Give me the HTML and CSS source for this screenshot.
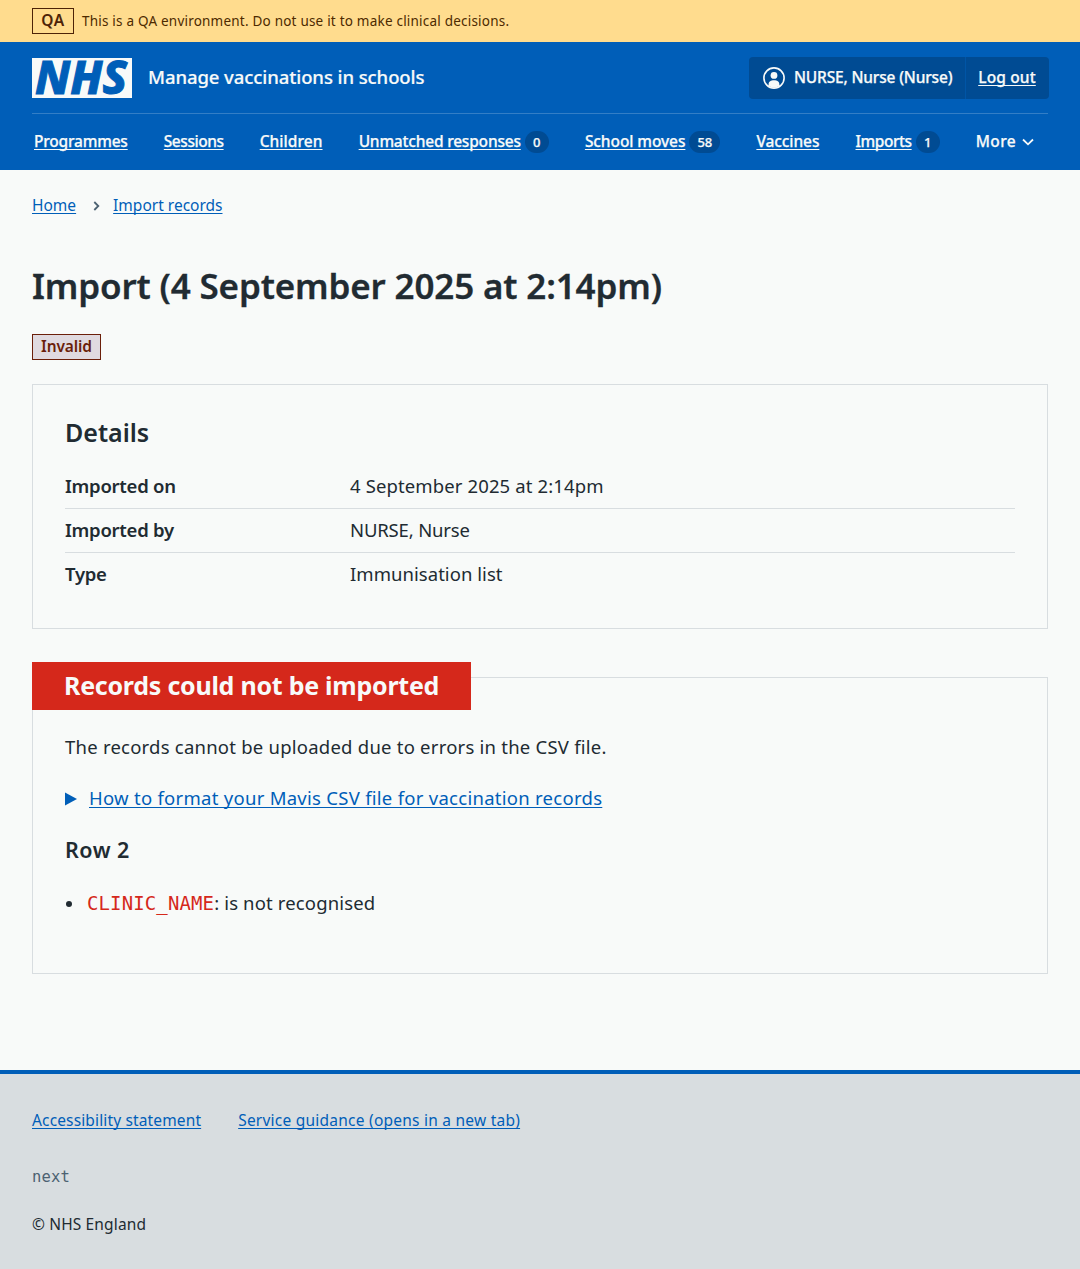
FILE: index.html
```html
<!DOCTYPE html>
<html lang="en">
<head>
<meta charset="utf-8">
<title>Import (4 September 2025 at 2:14pm)</title>
<link rel="stylesheet" href="styles.css">
</head>
<body>
<div class="banner"><strong class="tag tag-qa">QA</strong><span class="banner-text">This is a QA environment. Do not use it to make clinical decisions.</span></div>
<header class="header">
  <div class="header-top">
    <svg class="logo" viewBox="0 0 100 40" width="100" height="40" role="img" aria-label="NHS"><rect width="100" height="40" fill="#f8faf9"/><text x="3" y="36" textLength="92" lengthAdjust="spacingAndGlyphs">NHS</text></svg>
    <span class="service">Manage vaccinations in schools</span>
    <div class="account">
      <span class="account-user"><svg width="22" height="22" viewBox="0 0 22 22"><circle cx="11" cy="11" r="10.1" fill="none" stroke="currentColor" stroke-width="1.6"/><circle cx="11" cy="8.4" r="3.4" fill="currentColor"/><path d="M5.600 19v-1.500C5.600 14.500 8 13.200 11 13.200s5.400 1.300 5.400 4.300V19a10 10 0 0 1-10.800 0z" fill="currentColor"/></svg><span class="account-name">NURSE, Nurse (Nurse)</span></span>
      <a class="account-out" href="#">Log out</a>
    </div>
  </div>
  <nav class="nav">
    <a href="#" class="nav-link">Programmes</a>
    <a href="#" class="nav-link nav-tight">Sessions</a>
    <a href="#" class="nav-link nav-wide">Children</a>
    <span class="nav-item"><a href="#" class="nav-link">Unmatched responses</a><span class="count">0</span></span>
    <span class="nav-item"><a href="#" class="nav-link nav-even">School moves</a><span class="count">58</span></span>
    <a href="#" class="nav-link nav-even">Vaccines</a>
    <span class="nav-item"><a href="#" class="nav-link nav-tight">Imports</a><span class="count">1</span></span>
    <span class="nav-item"><span class="nav-more">More</span><svg class="chevron" width="12" height="8" viewBox="0 0 12 8"><path d="M1 1.500 6 6.300l5-4.800" fill="none" stroke="currentColor" stroke-width="1.800"/></svg></span>
  </nav>
</header>
<main class="main">
  <div class="crumbs"><a href="#">Home</a><svg width="7" height="10" viewBox="0 0 7 10"><path d="M1.300 1 5.300 5l-4 4" fill="none" stroke="#4c6272" stroke-width="1.800"/></svg><a href="#">Import records</a></div>
  <h1>Import (4 September 2025 at 2:14pm)</h1>
  <div class="status"><strong class="tag tag-invalid">Invalid</strong></div>
  <section class="card">
    <h2>Details</h2>
    <dl>
      <div class="row"><dt>Imported on</dt><dd class="wide">4 September 2025 at 2:14pm</dd></div>
      <div class="row"><dt>Imported by</dt><dd class="caps">NURSE, Nurse</dd></div>
      <div class="row"><dt>Type</dt><dd>Immunisation list</dd></div>
    </dl>
  </section>
  <section class="card card-error">
    <h2 class="error-label">Records could not be imported</h2>
    <p class="text">The records cannot be uploaded due to errors in the CSV file.</p>
    <div class="expander"><svg width="12" height="14" viewBox="0 0 12 14"><path d="M0 .500 12 7 0 13.500z" fill="#005eb8"/></svg><a href="#">How to format your Mavis CSV file for vaccination records</a></div>
    <h3>Row 2</h3>
    <ul><li><code>CLINIC_NAME</code><span>: is not recognised</span></li></ul>
  </section>
</main>
<footer class="footer">
  <div class="footer-links"><a href="#" class="footer-first">Accessibility statement</a><a href="#">Service guidance (opens in a new tab)</a></div>
  <p class="version"><code>next</code></p>
  <p class="copy">© NHS England</p>
</footer>
</body>
</html>
```
FILE: styles.css
```css
* { box-sizing: border-box; }
body { margin: 0; background: #f8faf9; color: #212b32; font-family: "Noto Sans", "Open Sans", sans-serif; font-size: 18.5px; }
h1, h2, h3, p, dl, dd, ul { margin: 0; padding: 0; }
a { color: #005eb8; text-underline-offset: 2px; text-decoration-thickness: 1px; text-decoration-skip-ink: none; }
.banner { display: flex; align-items: center; height: 42px; padding: 0 32px; gap: 8px; background: #ffdc8e; color: #4d2a00; font-size: 13.5px; }
.banner-text { letter-spacing: .212px; }
.tag { display: flex; align-items: center; justify-content: center; height: 26px; border: 1px solid; font-size: 15.5px; font-weight: 600; line-height: 22px; padding-bottom: 2px; }
.tag-qa { width: 42px; color: #4d2307; letter-spacing: .6px; }
.tag-invalid { width: 69px; color: #6b1f0a; background: #e0dae0; letter-spacing: -.1px; }
.header { height: 128px; padding: 0 32px; background: #005eb8; color: #f8faf9; }
.header-top { display: flex; align-items: center; height: 72px; border-bottom: 1px solid #337ec6; }
.logo { display: block; overflow: visible; }
.logo text { font: italic 800 46.5px "Noto Sans", sans-serif; fill: #005eb8; stroke: #005eb8; stroke-width: 1px; }
.service { margin-left: 16px; padding-bottom: 2px; font-weight: 500; letter-spacing: -.079px; -webkit-text-stroke: .2px currentColor; }
.account { display: flex; width: 300px; height: 42px; margin: 0 -1px 0 auto; background: #004b93; border-radius: 4px; font-size: 15.5px; font-weight: 500; -webkit-text-stroke: .25px currentColor; }
.account-user { display: flex; align-items: center; gap: 9px; width: 217px; padding-left: 14px; border-right: 1px solid #0055a6; }
.account-name { padding-bottom: 1px; letter-spacing: -.177px; }
.account-out { display: flex; align-items: center; justify-content: center; flex: 1; padding: 0 1px 1px 0; color: #f8faf9; letter-spacing: .15px; }
.nav { display: flex; justify-content: space-between; align-items: center; height: 56px; padding: 0 14px 2px 2px; font-size: 15.5px; font-weight: 500; -webkit-text-stroke: .25px currentColor; }
.nav-link { color: #f8faf9; letter-spacing: -.2px; }
.nav-tight { letter-spacing: -.45px; }
.nav-wide { letter-spacing: .05px; }
.nav-even { letter-spacing: -.08px; }
.nav-more { letter-spacing: .35px; }
.nav-item { display: flex; align-items: center; }
.count { position: relative; top: 1px; margin-left: 4px; padding: 0 8px; min-width: 24px; height: 22px; border-radius: 11px; background: #004b93; font-size: 13px; line-height: 22px; text-align: center; }
.chevron { margin: 2px 0 0 6px; }
.main { height: 900px; padding: 24px 32px 0; }
.crumbs { display: flex; align-items: center; height: 23px; font-size: 15.5px; }
.crumbs a { padding-bottom: 2px; }
.crumbs svg { margin: 0 13px 0 17px; }
h1 { margin-top: 46px; font-size: 35px; line-height: 46px; font-weight: 600; letter-spacing: -.152px; -webkit-text-stroke: .3px currentColor; }
.status { margin-top: 25px; }
.card { border: 1px solid #d8dde0; padding: 32px; margin-top: 24px; height: 245px; }
h2 { font-size: 25px; line-height: 30px; font-weight: 600; }
dl { margin-top: 18px; }
.row { display: flex; height: 44px; line-height: 26px; padding-top: 8px; border-bottom: 1px solid #d8dde0; }
.row:last-child { border: 0; }
dt { width: 285px; font-weight: 600; letter-spacing: -.26px; }
dd { letter-spacing: .048px; }
.wide { letter-spacing: .123px; }
.caps { letter-spacing: -.158px; }
.card-error { margin-top: 48px; height: 297px; padding-top: 0; }
.error-label { width: 439px; height: 48px; margin: -16px 0 0 -33px; padding: 0 0 0 32px; line-height: 47px; background: #d5281b; color: #f8faf9; font-weight: 700; letter-spacing: -.25px; white-space: nowrap; }
.text { margin-top: 24px; line-height: 26px; letter-spacing: .23px; }
.expander { display: flex; align-items: center; gap: 12px; margin-top: 24px; height: 28px; letter-spacing: .274px; }
.expander svg { margin-top: 1px; }
.expander a { padding-bottom: 2px; }
h3 { margin-top: 24px; font-size: 21.500px; line-height: 28px; font-weight: 600; letter-spacing: .5px; }
ul { list-style: none; margin-top: 26px; line-height: 26px; }
li { display: flex; align-items: center; letter-spacing: .146px; }
li::before { content: ""; width: 6px; height: 6px; margin: 2px 15px 0 1px; border-radius: 50%; background: #212b32; }
code { font-family: "DejaVu Sans Mono", monospace; }
li code { color: #d5281b; font-size: 19px; letter-spacing: .12px; }
.footer { height: 199px; border-top: 4px solid #005eb8; padding: 34px 32px 0; background: #d8dde0; font-size: 15.500px; line-height: 24px; }
.footer-links { display: flex; gap: 37px; letter-spacing: .235px; }
.footer-first { letter-spacing: .141px; }
.version { margin-top: 32px; color: #4c6272; letter-spacing: .2px; }
.copy { margin-top: 23px; letter-spacing: .143px; }
```
